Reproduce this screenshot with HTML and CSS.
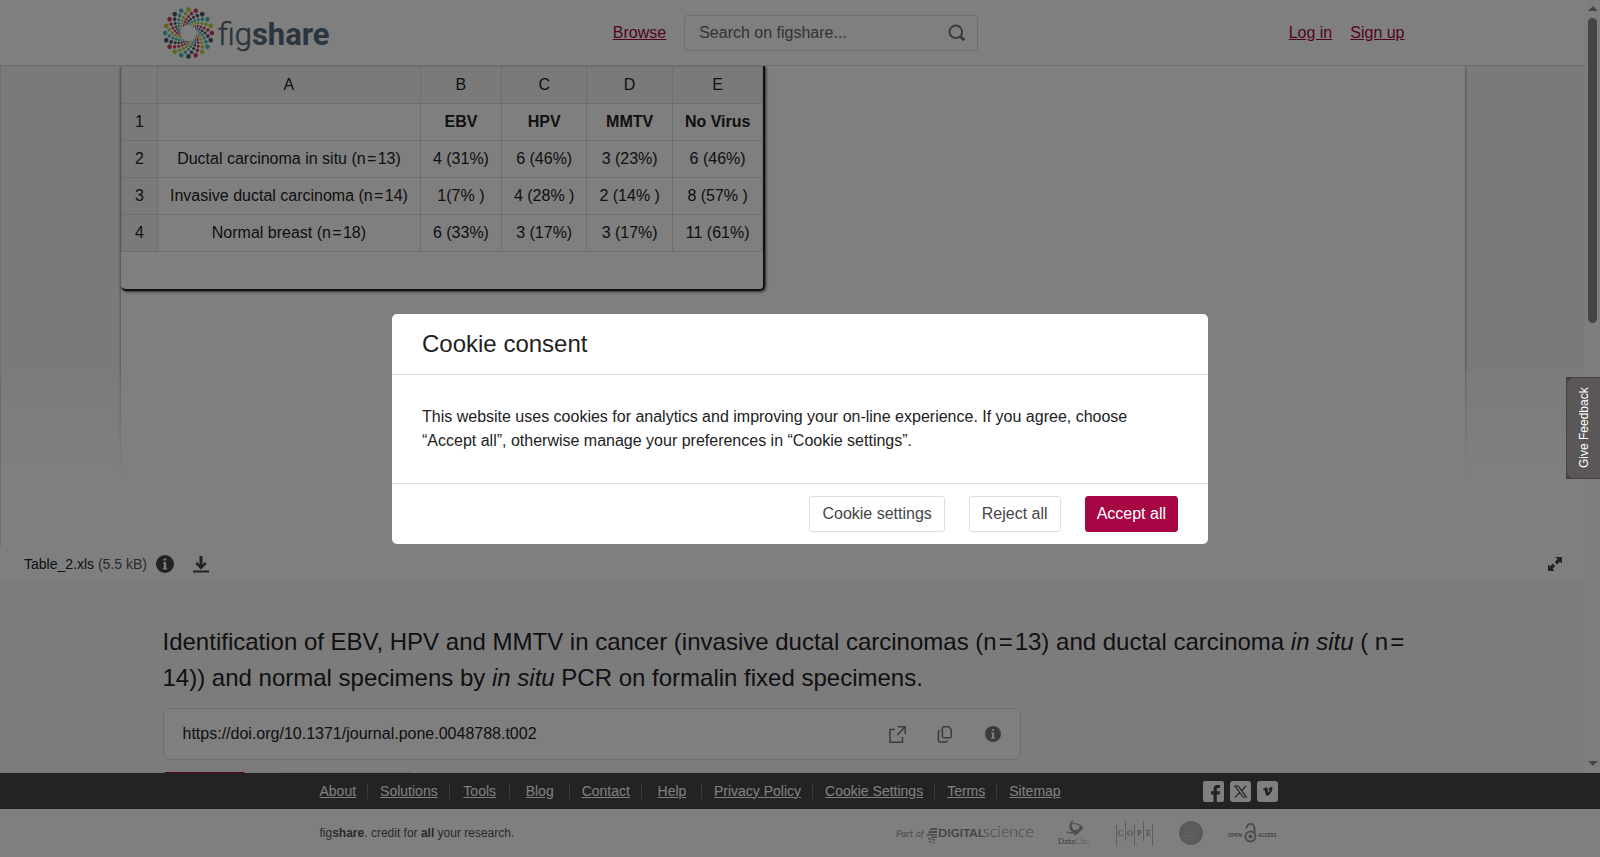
FILE: index.html
```html
<!DOCTYPE html>
<html lang="en">
<head>
<meta charset="utf-8">
<title>Identification of EBV, HPV and MMTV in cancer</title>
<link rel="stylesheet" href="styles.css">
</head>
<body>
<div class="page">
  <div class="viewport">
    <div class="content">
      <header class="header">
        <div class="container header-row">
          <a class="logo" href="#" aria-label="figshare home">
            <svg width="170" height="56" viewBox="0 0 170 56">
              <defs>
                <g id="arm">
                  <circle cx="0" cy="-23.4" r="2.3"/><circle cx="-3.05" cy="-19.3" r="1.8"/><circle cx="-5.1" cy="-15.6" r="1.5"/><circle cx="-6.3" cy="-12.3" r="1.3"/><circle cx="-6.9" cy="-9.5" r="1.1"/><circle cx="-7.1" cy="-7.1" r=".9"/><circle cx="-7" cy="-5.1" r=".7"/>
                </g>
                <g id="quad">
                  <use href="#arm" fill="#b4d334"/>
                  <use href="#arm" fill="#d03c58" transform="rotate(18)"/>
                  <use href="#arm" fill="#4c5468" transform="rotate(36)"/>
                  <use href="#arm" fill="#48bdb4" transform="rotate(54)"/>
                </g>
              </defs>
              <g transform="translate(25.5 28)">
                <use href="#quad"/>
                <use href="#quad" transform="rotate(72)"/>
                <use href="#quad" transform="rotate(144)"/>
                <use href="#quad" transform="rotate(216)"/>
                <use href="#quad" transform="rotate(288)"/>
              </g>
              <text class="wordmark" x="55" y="40">fig<tspan class="wordmark-bold">share</tspan></text>
            </svg>
          </a>
          <div class="header-mid">
            <a class="link" href="#">Browse</a>
            <form class="search">
              <input class="search-input" type="text" aria-label="Search on figshare" placeholder="Search on figshare...">
              <button class="icon-button search-button" type="button" aria-label="Search">
                <svg width="18" height="18" viewBox="0 0 18 18" fill="none" stroke="#777" stroke-width="2"><circle cx="7.8" cy="7.8" r="6.3"/><path d="M12 12l4.3 4.3" stroke-width="3"/></svg>
              </button>
            </form>
          </div>
          <nav class="account">
            <a class="link" href="#">Log in</a>
            <a class="link" href="#">Sign up</a>
          </nav>
        </div>
      </header>

      <section class="viewer">
        <div class="sheet">
          <div class="grid-frame">
            <table class="grid">
              <thead>
                <tr><th></th><th>A</th><th>B</th><th>C</th><th>D</th><th>E</th></tr>
              </thead>
              <tbody>
                <tr><th>1</th><td></td><td><b>EBV</b></td><td><b>HPV</b></td><td><b>MMTV</b></td><td><b>No Virus</b></td></tr>
                <tr><th>2</th><td>Ductal carcinoma in situ (n&#8202;=&#8202;13)</td><td>4 (31%)</td><td>6 (46%)</td><td>3 (23%)</td><td>6 (46%)</td></tr>
                <tr><th>3</th><td>Invasive ductal carcinoma (n&#8202;=&#8202;14)</td><td>1(7% )</td><td>4 (28% )</td><td>2 (14% )</td><td>8 (57% )</td></tr>
                <tr><th>4</th><td>Normal breast (n&#8202;=&#8202;18)</td><td>6 (33%)</td><td>3 (17%)</td><td>3 (17%)</td><td>11 (61%)</td></tr>
              </tbody>
            </table>
          </div>
        </div>
      </section>

      <div class="filebar">
        <span class="filename">Table_2.xls <span class="filesize">(5.5 kB)</span></span>
        <button class="icon-button" type="button" aria-label="File details">
          <svg width="18" height="18" viewBox="0 0 18 18"><circle cx="9" cy="9" r="9" fill="#444"/><path d="M7.600 3.600h2.600v2H7.600zM7 7.200h3.200v6h1v1.200H6.800v-1.200h1V8.400H7z" fill="#fff"/></svg>
        </button>
        <button class="icon-button" type="button" aria-label="Download">
          <svg width="16" height="18" viewBox="0 0 16 18" fill="none" stroke="#444"><path d="M8 1v11" stroke-width="3"/><path d="M3.200 7.800L8 12.600l4.800-4.800" stroke-width="2.600"/><path d="M0 16.500h16" stroke-width="2"/></svg>
        </button>
        <button class="icon-button expand" type="button" aria-label="Full screen">
          <svg width="14" height="14" viewBox="0 0 14 14" fill="#444"><path d="M7.500 0H14v6.500l-2-1.700L9.200 7.500 6.800 5l2.600-2.800zM6.500 14H0V7.500l2 1.700L4.800 6.500 7.200 9l-2.600 2.800z"/></svg>
        </button>
      </div>

      <main class="details">
        <div class="container">
          <h1 class="title">Identification of EBV, HPV and MMTV in cancer (invasive ductal carcinomas (n&#8202;=&#8202;13) and ductal carcinoma <i>in situ</i> ( n&#8202;=&#8202;14)) and normal specimens by <i>in situ</i> PCR on formalin fixed specimens.</h1>
          <div class="doi">
            <span class="doi-text">https://doi.org/10.1371/journal.pone.0048788.t002</span>
            <button class="icon-button" type="button" aria-label="Open link">
              <svg width="17" height="17" viewBox="0 0 17 17" fill="none" stroke="#777" stroke-width="1.5"><path d="M6 3.500H1v12.700h12.500V11M9 .8h7.200V8M16 1L8.200 9"/></svg>
            </button>
            <button class="icon-button" type="button" aria-label="Copy">
              <svg width="17" height="17" viewBox="0 0 17 17" fill="none" stroke="#777" stroke-width="1.5"><path d="M7 .8h4.600l2.600 2.800v6.600a1.600 1.600 0 0 1-1.600 1.600H7a1.600 1.600 0 0 1-1.600-1.600V2.400A1.600 1.600 0 0 1 7 .8zM3.200 4.400c-1.400 0-1.800.7-1.800 1.600v8.400c0 1 .6 1.700 1.700 1.700h5c1.200 0 1.900-.7 1.900-1.700"/></svg>
            </button>
            <button class="icon-button" type="button" aria-label="DOI information">
              <svg width="16" height="16" viewBox="0 0 18 18"><circle cx="9" cy="9" r="9" fill="#777"/><path d="M7.800 3.600h2.400v2H7.800zM7 7.200h3.200v6h1v1.200H6.800v-1.200h1V8.400H7z" fill="#fff"/></svg>
            </button>
          </div>
          <div class="actions">
            <button class="action action-primary" type="button" aria-label="Cite"></button>
            <button class="action" type="button" aria-label="Share"></button>
          </div>
        </div>
      </main>
    </div>
    <div class="scrollbar" aria-hidden="true">
      <span class="arrow arrow-up"></span>
      <span class="thumb"></span>
      <span class="arrow arrow-down"></span>
    </div>
  </div>

  <footer>
    <div class="footer-dark">
      <div class="footer-row">
        <ul class="footer-nav">
          <li><a href="#">About</a></li><li><a href="#">Solutions</a></li><li><a href="#">Tools</a></li><li><a href="#">Blog</a></li><li><a href="#">Contact</a></li><li><a href="#">Help</a></li><li><a href="#">Privacy Policy</a></li><li><a href="#">Cookie Settings</a></li><li><a href="#">Terms</a></li><li><a href="#">Sitemap</a></li>
        </ul>
        <div class="social">
          <a href="#" aria-label="Facebook"><svg width="21" height="21" viewBox="0 0 21 21"><rect width="21" height="21" rx="2" fill="#fff"/><path d="M10.500 21v-7.500H8V10.200h2.500V8.200C10.500 5 12.200 4 14.500 4h2.500v3h-1.700c-1.200 0-1.500.5-1.500 1.500v1.700H17l-.4 3.300h-2.800V21z" fill="#464646"/></svg></a>
          <a href="#" aria-label="X"><svg width="21" height="21" viewBox="0 0 21 21"><rect width="21" height="21" rx="3" fill="#fff"/><path d="M5 5h3.200l8 11H13zM16 4.800L11.300 10M9.700 11.300L5 16.300" fill="none" stroke="#464646" stroke-width="1.2"/></svg></a>
          <a href="#" aria-label="Vimeo"><svg width="21" height="21" viewBox="0 0 21 21"><rect width="21" height="21" rx="3" fill="#fff"/><path d="M6 8.300C7.200 7.300 8.300 6.300 9.100 6.300c2 0 1.500 4.400 2.400 5 .6-.2 1.600-2 1-2.500-.3-.3-.8-.1-1.100.1C12 6.800 13 6 14.200 6c1.500.1 1.400 1.600 1 2.900-.7 2.200-3 5.600-4.800 5.900-2.300 0-2-5.300-2.900-5.900l-.9.400z" fill="#464646"/></svg></a>
        </div>
      </div>
    </div>
    <div class="footer-light">
      <div class="footer-row">
        <p class="credit">fig<b>share</b>. credit for <b>all</b> your research.</p>
        <div class="partners">
          <svg width="137" height="26" viewBox="0 0 137 26">
            <text x="0" y="17" class="t-part">Part of</text>
            <path d="M35 8h6v2h-8zM33 11h8v2h-9zM31 14h10v1.500H30zM35 16.500h6V18h-6zM32 18h3v1.500h-3zM36 19h3v1.500h-3zM33 21h2v1.500h-2zM37 22h1.500v1.500H37z" fill="#999"/>
            <text x="42" y="17" class="t-ds">DIGITAL</text>
            <text x="87" y="17" class="t-ds-light">science</text>
          </svg>
          <svg width="33" height="26" viewBox="0 0 33 26">
            <path d="M15 .5c-5 3-4 11 1 12 5-1 8-2 9-5C22 4 18 3 14 3.500c5 .5 8 2 8 4-1 2-4 3-6 3C13 8 13 3 15 .5zM8 12c5 1 10 .5 14-2-1 3-3 5-6 5l3-2c-4 1-8 0-11-1z" fill="#999" stroke="#999" stroke-width=".6"/>
            <text x="0" y="24" class="t-dc">Data<tspan class="t-dc-light">Cite</tspan></text>
          </svg>
          <svg width="38" height="26" viewBox="0 0 38 26">
            <path d="M.5 4.500v21M9.500 1v20M18.500 4.500v21M27.500 1v20M36.500 4.500v21" stroke="#bbb"/>
            <text y="16" class="t-cope"><tspan x="2">C</tspan><tspan x="11">O</tspan><tspan x="21">P</tspan><tspan x="30">E</tspan></text>
          </svg>
          <svg width="24" height="24" viewBox="0 0 24 24">
            <circle cx="12" cy="12" r="12" fill="#b4b4b4"/>
            <path d="M8 5.500h7M5 8.500h14M6 11.500h12M5 14.500h14M7 18h10" stroke="#c6c6c6" stroke-width="1.500" stroke-dasharray="3 1"/>
          </svg>
          <svg width="50" height="20" viewBox="0 0 50 20">
            <g fill="none" stroke="#999" stroke-width="2"><circle cx="22.500" cy="13.500" r="5"/><path d="M18.500 5.500c0-6 8-6 8 0v5"/></g>
            <circle cx="22.500" cy="13.500" r="2" fill="#999"/>
            <text x="0" y="14" class="t-oa">OPEN</text><text x="30" y="14" class="t-oa">ACCESS</text>
          </svg>
        </div>
      </div>
    </div>
  </footer>
</div>

<div class="overlay">
  <div class="modal" role="dialog" aria-labelledby="consent-title">
    <h2 class="modal-title" id="consent-title">Cookie consent</h2>
    <p class="modal-body">This website uses cookies for analytics and improving your on-line experience. If you agree, choose “Accept all”, otherwise manage your preferences in “Cookie settings”.</p>
    <div class="modal-actions">
      <button class="btn" type="button">Cookie settings</button>
      <button class="btn" type="button">Reject all</button>
      <button class="btn btn-primary" type="button">Accept all</button>
    </div>
  </div>
</div>
<div class="feedback"><button class="feedback-button" type="button">Give Feedback</button></div>
</body>
</html>
```
FILE: styles.css
```css
* { box-sizing: border-box; }

body {
  margin: 0;
  font: 16px/24px "Liberation Sans", Arial, sans-serif;
  color: #222;
  background: #fff;
}

h1, h2, p, ul { margin: 0; padding: 0; font-weight: normal; }
svg { display: block; overflow: visible; }
button, input { font: inherit; }

.page { height: 100vh; display: flex; flex-direction: column; overflow: hidden; }
.viewport { flex: 1; min-height: 0; display: flex; }
.content { flex: 1; min-width: 0; display: flex; flex-direction: column; overflow: hidden; }
.container { width: 100%; max-width: 1260px; margin: 0 auto; }
.icon-button { flex: none; border: 0; padding: 0; background: none; cursor: pointer; }

/* header */
.header { flex: none; border-bottom: 1px solid #ddd; background: #fff; }
.header-row { display: flex; align-items: center; height: 65px; padding-right: 18px; }
.logo, .account { flex: 1; }
.logo { margin-right: 24px; }
.header-mid { display: flex; align-items: center; gap: 18px; }
.link { color: #a60644; text-decoration: underline; }
.search { position: relative; width: 294px; }
.search-input {
  display: block;
  width: 100%;
  height: 36px;
  padding: 0 45px 0 14px;
  border: 1px solid #ddd;
  border-radius: 3px;
  background: #fff;
  color: #222;
}
.search-input::placeholder { color: #666; opacity: 1; }
.search-button { position: absolute; top: 9px; right: 12px; }
.account { display: flex; justify-content: flex-end; gap: 18px; }
.wordmark { font: 300 31px Roboto, sans-serif; fill: #546a7a; stroke: #546a7a; stroke-width: 0.5px; }
.wordmark-bold { font-weight: 700; stroke: none; }

/* spreadsheet preview */
.viewer {
  flex: none;
  height: 480px;
  padding: 0 120px;
  border-left: 1px solid #ddd;
  position: relative;
  background: #f5f5f5;
  overflow: hidden;
}
.viewer::after {
  content: "";
  position: absolute;
  inset: 306px 0 0;
  background: linear-gradient(rgba(255, 255, 255, 0.2), #fff 110px);
}
.sheet { height: 100%; background: #fff; box-shadow: 0 0 3px #777; }
.grid-frame {
  width: fit-content;
  padding-bottom: 37px;
  border: solid #222;
  border-width: 0 2px 2px 0;
  border-radius: 0 0 5px 5px;
  box-shadow: 1px 1px 3px #555;
}
.grid { border-collapse: collapse; text-align: center; }
.grid th, .grid td { height: 37px; padding: 6px 12px; border: 1px solid #ddd; font-weight: normal; white-space: nowrap; }
.grid th { background: #f5f5f5; }
.grid th:first-child { min-width: 36px; }
.grid b { font-weight: bold; }

.filebar { flex: none; display: flex; align-items: center; height: 36px; padding: 0 23px 0 24px; background: #fff; font-size: 14px; }
.filename { margin-right: 9px; }
.filesize { color: #555; }
.filebar .icon-button + .icon-button { margin-left: 19px; }
.filebar .icon-button.expand { margin-left: auto; }

/* item details */
.details { flex: 1; min-height: 0; padding-top: 42px; background: #f9f9f9; overflow: hidden; }
.title { padding-right: 12px; font-size: 24px; line-height: 36px; }
.doi {
  display: flex;
  align-items: center;
  gap: 31px;
  max-width: 858px;
  height: 52px;
  margin-top: 12px;
  padding: 0 19px;
  border: 1px solid #ddd;
  border-radius: 6px;
  background: #fff;
}
.doi-text { flex: 1; }
.actions { display: flex; gap: 32px; margin-top: 12px; }
.action { width: 136px; height: 36px; border: 1px solid #ddd; border-radius: 3px; background: #fff; }
.action-primary { width: 83px; border-color: #a60644; background: #a60644; }

/* scrollbar */
.scrollbar { flex: none; width: 15px; display: flex; flex-direction: column; align-items: center; padding: 6px 0 7px; background: #fcfcfc; }
.thumb { width: 9px; height: 305px; margin: 7px 0 auto; border-radius: 5px; background: #8b8b8b; }
.arrow { border: solid transparent; border-width: 0 5px; }
.arrow-up { border-bottom: 5px solid #8b8b8b; }
.arrow-down { border-top: 5px solid #8b8b8b; }

/* footer */
footer { flex: none; }
.footer-dark { height: 36px; padding-right: 15px; background: #464646; font-size: 14px; }
.footer-light { height: 48px; padding-right: 15px; background: #fff; }
.footer-row { display: flex; align-items: center; justify-content: space-between; max-width: 970px; height: 100%; margin: 0 auto; }
.footer-nav { display: flex; list-style: none; }
.footer-nav li { min-width: 60px; padding: 0 11px 0 12px; border-right: 1px solid #777; line-height: 15px; text-align: center; white-space: nowrap; }
.footer-nav li:last-child { border-right: 0; }
.footer-nav a { color: #fff; text-decoration: underline; }
.social { display: flex; gap: 6px; }
.credit { padding-left: 12px; font-size: 12px; color: #555; }
.partners { display: flex; align-items: center; gap: 25px; }

.t-part { font: italic 10px Lato, sans-serif; fill: #999; }
.t-ds { font: 700 12px Lato, sans-serif; fill: #888; }
.t-ds-light { font: 300 16px Lato, sans-serif; fill: #888; }
.t-dc { font: 400 8px Lato, sans-serif; fill: #777; }
.t-dc-light { font-weight: 300; }
.t-cope { font: 8px "Liberation Serif", serif; fill: #777; }
.t-oa { font: 700 5px "Open Sans", sans-serif; fill: #888; }

/* consent dialog */
.overlay {
  position: fixed;
  inset: 0;
  display: flex;
  align-items: center;
  justify-content: center;
  background: rgba(0, 0, 0, 0.5);
}
.modal { width: 816px; max-width: 90%; border-radius: 5px; background: #fff; }
.modal-title { padding: 12px 30px; border-bottom: 1px solid #ddd; font-size: 24px; line-height: 36px; }
.modal-body { padding: 30px; }
.modal-actions { display: flex; justify-content: flex-end; gap: 24px; padding: 12px 30px; border-top: 1px solid #ddd; }
.btn { height: 36px; padding: 0 12px; border: 1px solid #ddd; border-radius: 3px; background: #fff; color: #464646; }
.btn-primary { padding: 0 11px; border-color: #a60644; background: #a60644; color: #fff; }

.feedback { position: fixed; right: 0; top: 44%; background: #444; }
.feedback-button {
  display: block;
  width: 34px;
  height: 102px;
  padding: 0;
  border: 1px solid #444;
  border-left: 0;
  border-radius: 0 8px 8px 0;
  background: #5b5758;
  color: #fff;
  font-size: 12px;
  line-height: 32px;
  writing-mode: vertical-rl;
  transform: rotate(180deg);
}
```
